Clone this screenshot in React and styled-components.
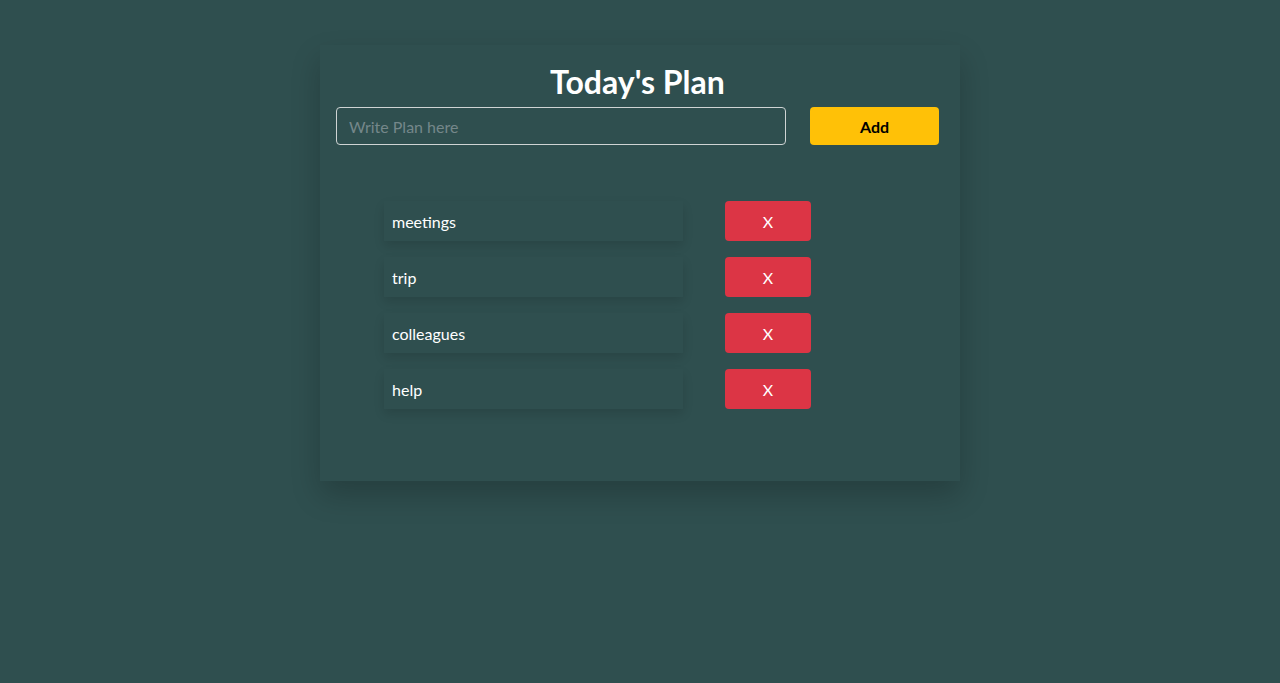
import styled, { createGlobalStyle } from 'styled-components';

const plans = ['meetings', 'trip', 'colleagues', 'help'];

function App() {
  return (
    <StyledPage>
      <GlobalStyle />
      <StyledCard>
        <StyledTitle>Today's Plan</StyledTitle>
        <StyledForm onSubmit={e => e.preventDefault()}>
          <StyledInput type="text" placeholder="Write Plan here" />
          <StyledAddButton type="submit">Add</StyledAddButton>
        </StyledForm>
        <StyledList>
          {plans.map(plan => (
            <StyledRow key={plan}>
              <StyledItem>{plan}</StyledItem>
              <StyledDeleteButton>X</StyledDeleteButton>
            </StyledRow>
          ))}
        </StyledList>
      </StyledCard>
    </StyledPage>
  );
}

const GlobalStyle = createGlobalStyle`
  html, body {
    margin: 0;
    background-color: #2f4f4f;
    font-family: Lato, "Open Sans", sans-serif;
  }
`;

const StyledPage = styled.div`
  min-height: 100vh;
  box-sizing: border-box;
  padding-top: 45px;
  background-color: #2f4f4f;
`;

const StyledCard = styled.div`
  width: 640px;
  box-sizing: border-box;
  margin: 0 auto;
  padding: 12px 21px 72px 16px;
  background-color: #2f4f4f;
  box-shadow: 0 14px 28px rgba(0, 0, 0, 0.2);
`;

const StyledTitle = styled.h1`
  margin: 0;
  height: 50px;
  line-height: 50px;
  text-align: center;
  color: #fff;
  font-size: 32px;
  font-weight: 700;
`;

const StyledForm = styled.form`
  display: flex;
  gap: 24px;
  align-items: center;
`;

const StyledInput = styled.input`
  width: 450px;
  height: 38px;
  box-sizing: border-box;
  padding: 0 12px;
  border: 1px solid #cfd4d4;
  border-radius: 4px;
  background: transparent;
  color: #fff;
  font-family: inherit;
  font-size: 16px;
  outline: none;

  &::placeholder {
    color: #75878a;
  }
`;

const StyledAddButton = styled.button`
  width: 129px;
  height: 38px;
  border: none;
  border-radius: 4px;
  background-color: #ffc107;
  color: #000;
  font-family: inherit;
  font-size: 16px;
  font-weight: 700;
  cursor: pointer;
`;

const StyledList = styled.ul`
  display: flex;
  flex-direction: column;
  gap: 16px;
  margin: 56px 0 0;
  padding: 0 0 0 48px;
  list-style: none;
`;

const StyledRow = styled.li`
  display: flex;
  align-items: center;
  gap: 42px;
`;

const StyledItem = styled.div`
  width: 299px;
  height: 40px;
  box-sizing: border-box;
  padding: 0 8px;
  display: flex;
  align-items: center;
  color: #fff;
  font-size: 16px;
  box-shadow: 0 5px 10px rgba(0, 0, 0, 0.12);
`;

const StyledDeleteButton = styled.button`
  width: 86px;
  height: 40px;
  border: none;
  border-radius: 4px;
  background-color: #dc3545;
  color: #fff;
  font-family: inherit;
  font-size: 16px;
  cursor: pointer;
`;

export default App;
